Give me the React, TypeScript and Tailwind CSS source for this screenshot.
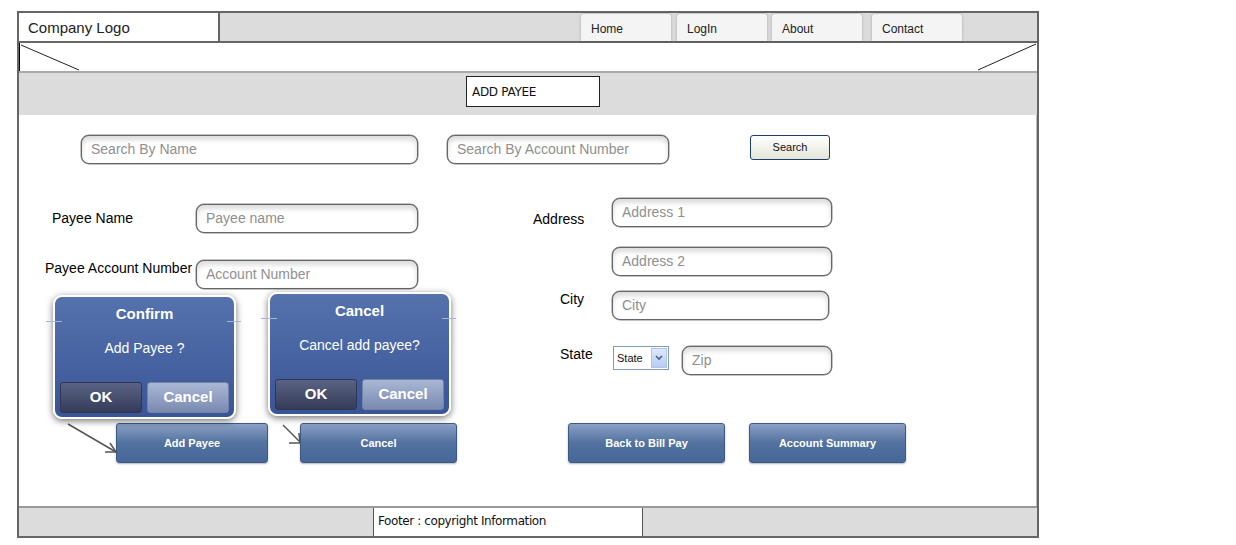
import React from 'react';

const font = "font-['Liberation_Sans',Arial,sans-serif]";

function Field({ text, className = '' }: { text: string; className?: string }) {
  return (
    <div
      className={`h-[29px] rounded-[8px] border border-[#666] bg-white shadow-[inset_0_4px_5px_rgba(0,0,0,0.14),0_0_0_0.5px_#888] flex items-center pl-[9px] text-[14px] text-[#8f8f8f] ${className}`}
    >
      {text}
    </div>
  );
}

function BlueButton({ label, className = '' }: { label: string; className?: string }) {
  return (
    <div
      className={`h-[40px] rounded-[3px] border border-[#3d5a86] bg-gradient-to-b from-[#8aa0c4] via-[#52719f] to-[#46679a] shadow-[0_1px_2px_rgba(0,0,0,0.3)] flex items-center justify-center text-[11px] font-bold text-white ${className}`}
    >
      {label}
    </div>
  );
}

function Dialog({
  title,
  message,
  className = '',
}: {
  title: string;
  message: string;
  className?: string;
}) {
  return (
    <div
      className={`absolute w-[183px] h-[124px] rounded-[9px] border-2 border-white bg-gradient-to-b from-[#5572ad] to-[#3a5596] shadow-[0_2px_7px_rgba(0,0,0,0.55)] flex flex-col items-center ${className}`}
    >
      <div className="absolute left-[-9px] top-[24px] w-[16px] h-px bg-[#a9b6d3]" />
      <div className="absolute right-[-7px] top-[24px] w-[14px] h-px bg-[#a9b6d3]" />
      <div className="mt-[6px] text-[15px] font-bold text-white">{title}</div>
      <div className="mt-[12px] text-[14px] text-white">{message}</div>
      <div className="mt-auto mb-[4px] flex gap-[5px] px-[5px] w-full">
        <div className="flex-1 h-[31px] rounded-[3px] border border-[#2f3552] bg-gradient-to-b from-[#5b6385] to-[#353c59] flex items-center justify-center text-[15px] font-bold text-white">
          OK
        </div>
        <div className="flex-1 h-[31px] rounded-[3px] border border-[#7283aa] bg-gradient-to-b from-[#aab7d4] to-[#7a8ab0] flex items-center justify-center text-[15px] font-bold text-white">
          Cancel
        </div>
      </div>
    </div>
  );
}

export default function App() {
  return (
    <div className={`w-full h-[545px] bg-white ${font} text-black`}>
      <div className="ml-[17px] mt-[11px] w-[1022px] h-[527px] border-2 border-[#666] flex flex-col">
        {/* header */}
        <div className="h-[30px] bg-[#dcdcdc] border-b-2 border-[#666] flex">
          <div className="w-[201px] bg-white border-r-2 border-[#666] flex items-center pl-[9px] pt-[2px] text-[15px] text-[#222]">
            Company Logo
          </div>
          <div className="ml-[361px] flex items-end">
            {[
              { t: 'Home', ml: '' },
              { t: 'LogIn', ml: 'ml-[6px]' },
              { t: 'About', ml: 'ml-[5px]' },
              { t: 'Contact', ml: 'ml-[10px]' },
            ].map((tab) => (
              <div
                key={tab.t}
                className={`${tab.ml} w-[90px] h-[27px] rounded-t-[3px] bg-[#f4f4f4] shadow-[0_0_3px_rgba(0,0,0,0.25)] flex items-center pl-[10px] pt-[2px] text-[12px] text-[#222]`}
              >
                {tab.t}
              </div>
            ))}
          </div>
        </div>

        {/* image band */}
        <div className="h-[28px] bg-white border-l border-black relative">
          <svg className="absolute inset-0" width="1017" height="28">
            <line x1="1" y1="2" x2="59" y2="27" stroke="#222" strokeWidth="1" />
            <line x1="1016" y1="1" x2="958" y2="27" stroke="#222" strokeWidth="1" />
          </svg>
        </div>

        {/* title band */}
        <div className="h-[44px] bg-[#dcdcdc] border-t-2 border-[#aaa] flex items-start">
          <div className="ml-[447px] mt-[3px] w-[134px] h-[31px] bg-white border border-[#222] flex items-center pl-[5px] text-[12px] font-['DejaVu_Sans',sans-serif] text-[#111] tracking-[-0.3px]">
            ADD PAYEE
          </div>
        </div>

        {/* content */}
        <div className="flex-1 bg-white relative border-r border-[#bbb]">
          <div className="mt-[20px] flex items-start pl-[62px]">
            <Field text="Search By Name" className="w-[337px]" />
            <Field text="Search By Account Number" className="ml-[29px] w-[222px]" />
            <div className="ml-[81px] w-[80px] h-[25px] rounded-[3px] border border-[#1c3f6e] bg-gradient-to-b from-white to-[#e5e5da] flex items-center justify-center text-[11px] text-[#111]">
              Search
            </div>
          </div>

          <div className="mt-[34px] flex items-start">
            {/* left column */}
            <div className="w-[399px]">
              <div className="mt-[6px] flex items-center pl-[33px]">
                <div className="w-[144px] text-[14px]">Payee Name</div>
                <Field text="Payee name" className="w-[222px]" />
              </div>
              <div className="mt-[27px] flex items-start pl-[26px]">
                <div className="w-[151px] text-[14px] leading-[16px]">Payee Account Number</div>
                <Field text="Account Number" className="w-[222px]" />
              </div>
            </div>

            {/* right column */}
            <div className="ml-[115px]">
              <div className="flex items-start">
                <div className="w-[79px] mt-[13px] text-[14px] leading-[16px]">Address</div>
                <Field text="Address 1" className="w-[220px]" />
              </div>
              <div className="mt-[20px] pl-[79px]">
                <Field text="Address 2" className="w-[220px]" />
              </div>
              <div className="mt-[15px] flex items-start pl-[27px]">
                <div className="w-[52px] text-[14px] leading-[16px]">City</div>
                <Field text="City" className="w-[217px]" />
              </div>
              <div className="mt-[26px] flex items-start pl-[27px]">
                <div className="w-[53px] text-[14px] leading-[16px]">State</div>
                <div className="w-[56px] h-[24px] border border-[#7f9db9] bg-white flex items-center">
                  <span className="pl-[3px] text-[11px] text-[#111] flex-1">State</span>
                  <div className="w-[16px] h-[20px] mr-[1px] bg-gradient-to-b from-[#dfe8fc] to-[#b8cbf3] border border-[#b0c3ea] flex items-center justify-center">
                    <svg width="8" height="6" viewBox="0 0 8 6">
                      <path d="M1 1 L4 4 L7 1" fill="none" stroke="#4d6185" strokeWidth="1.6" />
                    </svg>
                  </div>
                </div>
                <Field text="Zip" className="ml-[13px] w-[150px]" />
              </div>
            </div>
          </div>

          <div className="mt-[48px] flex pl-[97px]">
            <BlueButton label="Add Payee" className="w-[152px]" />
            <BlueButton label="Cancel" className="ml-[32px] w-[157px]" />
            <BlueButton label="Back to Bill Pay" className="ml-[111px] w-[157px]" />
            <BlueButton label="Account Summary" className="ml-[24px] w-[157px]" />
          </div>

          {/* connectors from dialogs to buttons */}
          <svg className="absolute left-0 top-0 pointer-events-none" width="1016" height="390">
            <g stroke="#555" strokeWidth="1.5" fill="none">
              <path d="M49 309 L97 337" />
              <path d="M86 337 L97 337 L91 328" />
              <path d="M264 310 L281 327" />
              <path d="M270 328 L281 328 L280 318" />
            </g>
          </svg>

          <Dialog title="Confirm" message="Add Payee ?" className="left-[34px] top-[180px]" />
          <Dialog title="Cancel" message="Cancel add payee?" className="left-[249px] top-[177px]" />
        </div>

        {/* footer */}
        <div className="h-[30px] bg-[#dcdcdc] border-t-2 border-[#999] flex">
          <div className="ml-[354px] w-[270px] bg-white border-x border-[#555] flex items-center pl-[4px] pb-[2px] text-[12px] font-['DejaVu_Sans',sans-serif] text-[#111] tracking-[-0.4px]">
            Footer : copyright Information
          </div>
        </div>
      </div>
    </div>
  );
}
